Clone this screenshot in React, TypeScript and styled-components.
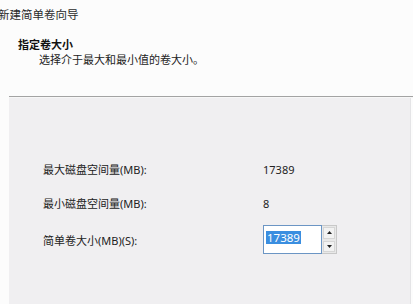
import React from "react";
import styled, { createGlobalStyle } from "styled-components";

const Global = createGlobalStyle`
  html, body { margin: 0; padding: 0; background: #fcfcfc; }
  body {
    width: 413px; height: 304px; overflow: hidden;
    font-family: "Noto Sans", "Noto Sans CJK SC", sans-serif;
    color: #1e1e1e;
  }
`;

const Window = styled.div`
  width: 413px;
  height: 304px;
  display: flex;
  flex-direction: column;
  background: #fcfcfc;
`;

const Header = styled.div`
  height: 96px;
  box-sizing: border-box;
  display: flex;
  flex-direction: column;
`;

const Title = styled.div`
  font-size: 11.5px;
  line-height: 14px;
  color: #2a2a2a;
  margin: 8px 0 0 -2px;
  white-space: nowrap;
`;

const Heading = styled.div`
  font-size: 11px;
  font-weight: 700;
  line-height: 14px;
  color: #111;
  margin: 16px 0 0 18px;
`;

const Sub = styled.div`
  font-size: 11px;
  line-height: 14px;
  color: #222;
  margin: 1px 0 0 39px;
`;

const Separator = styled.div`
  margin-left: 9px;
  height: 1px;
  background: #a3a3a3;
  border-bottom: 1px solid #f7f7f7;
`;

const Panel = styled.div`
  flex: 1;
  margin-left: 9px;
  margin-right: 2px;
  background: #f0eff1;
  border-right: 1px solid #e4e4e6;
  padding: 61px 0 0 34px;
  display: flex;
  flex-direction: column;
`;

const Row = styled.div<{ $h: number; $gap: number }>`
  display: grid;
  grid-template-columns: 220px auto;
  align-items: center;
  height: ${(p) => p.$h}px;
  margin-top: ${(p) => p.$gap}px;
  font-size: 11px;
  color: #222;
`;

const Value = styled.span`
  font-size: 11px;
`;

const Spin = styled.div`
  display: flex;
  width: 74px;
  height: 29px;
  box-sizing: border-box;
`;

const Field = styled.div`
  width: 59px;
  height: 29px;
  box-sizing: border-box;
  border: 1px solid #6b95c4;
  background: #fff;
  padding: 4px 0 0 2px;
`;

const Selected = styled.span`
  display: inline-block;
  background: #3a8ee0;
  color: #fff;
  font-size: 11.5px;
  line-height: 13px;
  padding: 0 1px;
`;

const Buttons = styled.div`
  width: 15px;
  height: 29px;
  box-sizing: border-box;
  border: 1px solid #c8c8c8;
  border-left: none;
  background: #e8e8e8;
  display: flex;
  flex-direction: column;
`;

const Btn = styled.div`
  flex: 1;
  display: flex;
  align-items: center;
  justify-content: center;
  border: 1px solid #d6d6d6;
  background: #f2f2f2;
  margin: 1px;
`;

const Arrow = ({ up }: { up?: boolean }) => (
  <svg width="5" height="3" viewBox="0 0 5 3">
    <path d={up ? "M0 3 L2.5 0 L5 3 Z" : "M0 0 L2.5 3 L5 0 Z"} fill="#222" />
  </svg>
);

export default function App() {
  return (
    <Window>
      <Global />
      <Header>
        <Title>新建简单卷向导</Title>
        <Heading>指定卷大小</Heading>
        <Sub>选择介于最大和最小值的卷大小。</Sub>
      </Header>
      <Separator />
      <Panel>
        <Row $h={20} $gap={0}>
          <span>最大磁盘空间量(MB):</span>
          <Value>17389</Value>
        </Row>
        <Row $h={20} $gap={14}>
          <span>最小磁盘空间量(MB):</span>
          <Value>8</Value>
        </Row>
        <Row $h={29} $gap={12}>
          <span>简单卷大小(MB)(S):</span>
          <Spin>
            <Field>
              <Selected>17389</Selected>
            </Field>
            <Buttons>
              <Btn>
                <Arrow up />
              </Btn>
              <Btn>
                <Arrow />
              </Btn>
            </Buttons>
          </Spin>
        </Row>
      </Panel>
    </Window>
  );
}
